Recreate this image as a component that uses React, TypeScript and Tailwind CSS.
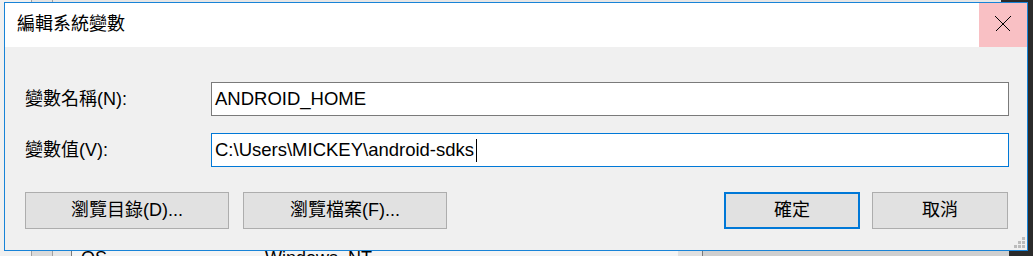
// --- Diálogo "編輯系統變數" sobre a janela de variáveis de ambiente ---
const fontStack = "font-['Liberation_Sans','Noto_Sans_CJK_TC',sans-serif]";

function CloseIcon() {
    return (
        <svg width="16" height="16" viewBox="0 0 16 16" shapeRendering="crispEdges">
            <line x1="0.5" y1="0.5" x2="15.5" y2="15.5" stroke="#000" strokeWidth="1" />
            <line x1="15.5" y1="0.5" x2="0.5" y2="15.5" stroke="#000" strokeWidth="1" />
        </svg>
    );
}

function Grip() {
    const dot = 'w-[3px] h-[3px] bg-[#bcbcbc]';
    return (
        <div className="flex flex-col items-end gap-px">
            <div className="flex gap-px"><span className={dot} /></div>
            <div className="flex gap-px"><span className={dot} /><span className={dot} /></div>
            <div className="flex gap-px"><span className={dot} /><span className={dot} /><span className={dot} /></div>
        </div>
    );
}

function WinButton({ label, width, primary }: { label: string; width: string; primary?: boolean }) {
    return (
        <button
            type="button"
            className={`${width} h-[37px] bg-[#e1e1e1] text-[18px] text-black flex items-center justify-center ${
                primary ? 'border-2 border-[#0078d7]' : 'border border-[#adadad]'
            }`}
        >
            {label}
        </button>
    );
}

export default function App() {
    return (
        <div className={`w-[1033px] h-[256px] overflow-hidden bg-[#f0f0f0] flex flex-col ${fontStack}`}>
            {/* faixa superior da janela de trás */}
            <div className="h-[2px] flex shrink-0">
                <div className="w-[32px] bg-[#f0f0f0] border-r border-[#a0a0a0]" />
                <div className="w-[21px] bg-[#e3e3e3] border-r border-[#a0a0a0]" />
                <div className="flex-1 bg-[#e6e6e6]" />
                <div className="w-[32px] bg-[#2b2b2b]" />
            </div>

            <div className="flex shrink-0">
                <div className="w-[4px] bg-[#f0f0f0]" />
                {/* diálogo */}
                <div className="w-[1024px] h-[249px] border border-[#1883d7] flex flex-col bg-[#f0f0f0]">
                    <div className="h-[44px] bg-white flex items-stretch shrink-0">
                        <div className="flex-1 flex items-center pl-[12px] pb-[2px] text-[18px] text-black">編輯系統變數</div>
                        <div className="w-[48px] bg-[#f9c0c4] flex items-center justify-center pb-[2px]">
                            <CloseIcon />
                        </div>
                    </div>

                    <div className="flex-1 flex flex-col pt-[35px] pl-[20px] pr-[18px] text-[18px] text-black relative">
                        <div className="flex items-center h-[34px]">
                            <label className="w-[186px]">變數名稱(N):</label>
                            <div className="w-[798px] h-[34px] bg-white border border-[#7a7a7a] flex items-center pl-[3px] text-[18.5px]">
                                ANDROID_HOME
                            </div>
                        </div>
                        <div className="flex items-center h-[34px] mt-[17px]">
                            <label className="w-[186px]">變數值(V):</label>
                            <div className="w-[798px] h-[34px] bg-white border border-[#0078d7] flex items-center pl-[3px] text-[18.5px]">
                                C:\Users\MICKEY\android-sdks
                                <span className="w-px h-[23px] bg-black ml-[2px]" />
                            </div>
                        </div>
                        <div className="flex items-center mt-[25px] pr-px">
                            <div className="flex gap-[14px]">
                                <WinButton label="瀏覽目錄(D)..." width="w-[204px]" />
                                <WinButton label="瀏覽檔案(F)..." width="w-[204px]" />
                            </div>
                            <div className="flex gap-[12px] ml-auto">
                                <WinButton label="確定" width="w-[136px]" primary />
                                <WinButton label="取消" width="w-[136px]" />
                            </div>
                        </div>
                        <div className="absolute right-[2px] bottom-[2px]">
                            <Grip />
                        </div>
                    </div>
                </div>
                <div className="w-[5px] bg-[#2b2b2b]" />
            </div>

            {/* faixa inferior: linha "OS / Windows_NT" da janela de trás */}
            <div className="h-[5px] flex overflow-hidden shrink-0 text-[18px] text-black">
                <div className="w-[32px] bg-[#f0f0f0] border-r border-[#a0a0a0]" />
                <div className="w-[21px] bg-[#dadada] border-r border-[#a0a0a0]" />
                <div className="w-[19px] bg-[#e6e6e6] border-r border-[#7a7a7a]" />
                <div className="w-[606px] bg-[#f4f4f4] flex">
                    <span className="w-[193px] pl-[9px] leading-[18px] -mt-[2px]">OS</span>
                    <span className="leading-[18px] -mt-[2px]">Windows_NT</span>
                </div>
                <div className="w-[25px] bg-[#e0e0e0] border-r border-[#7a7a7a]" />
                <div className="w-[306px] bg-[#cfcfcf]" />
                <div className="flex-1 bg-[#2b2b2b]" />
            </div>
        </div>
    );
}
